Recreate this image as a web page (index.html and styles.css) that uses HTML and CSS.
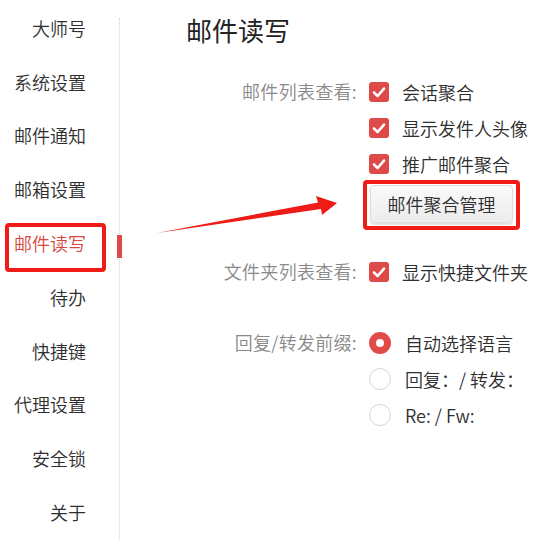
FILE: index.html
```html
<!DOCTYPE html>
<html lang="zh-CN">
<head>
    <meta charset="UTF-8">
    <meta name="viewport" content="width=device-width, initial-scale=1.0">
    <title>邮件读写</title>
    <link rel="stylesheet" href="styles.css">
</head>
<body>
    <div class="app">
        <nav class="sidebar">
            <a class="nav-item">大师号</a>
            <a class="nav-item">系统设置</a>
            <a class="nav-item">邮件通知</a>
            <a class="nav-item">邮箱设置</a>
            <a class="nav-item active">邮件读写<span class="mark"></span></a>
            <a class="nav-item">待办</a>
            <a class="nav-item">快捷键</a>
            <a class="nav-item">代理设置</a>
            <a class="nav-item">安全锁</a>
            <a class="nav-item">关于</a>
        </nav>

        <main class="content">
            <h1 class="title">邮件读写</h1>

            <div class="setting first">
                <div class="setting-label">邮件列表查看:</div>
                <div class="setting-options">
                    <label class="option">
                        <span class="checkbox"><svg viewBox="0 0 20 20"><polyline points="5,10.5 8.6,14 15,6.6"/></svg></span>
                        会话聚合
                    </label>
                    <label class="option">
                        <span class="checkbox"><svg viewBox="0 0 20 20"><polyline points="5,10.5 8.6,14 15,6.6"/></svg></span>
                        显示发件人头像
                    </label>
                    <label class="option">
                        <span class="checkbox"><svg viewBox="0 0 20 20"><polyline points="5,10.5 8.6,14 15,6.6"/></svg></span>
                        推广邮件聚合
                    </label>
                    <div class="btn-wrap">
                        <button class="btn">邮件聚合管理</button>
                    </div>
                </div>
            </div>

            <div class="setting second">
                <div class="setting-label">文件夹列表查看:</div>
                <div class="setting-options">
                    <label class="option">
                        <span class="checkbox"><svg viewBox="0 0 20 20"><polyline points="5,10.5 8.6,14 15,6.6"/></svg></span>
                        显示快捷文件夹
                    </label>
                </div>
            </div>

            <div class="setting third">
                <div class="setting-label">回复/转发前缀:</div>
                <div class="setting-options">
                    <label class="option radio-option">
                        <span class="radio checked"></span>
                        自动选择语言
                    </label>
                    <label class="option radio-option">
                        <span class="radio"></span>
                        回复：/ 转发：
                    </label>
                    <label class="option radio-option">
                        <span class="radio"></span>
                        Re: / Fw:
                    </label>
                </div>
            </div>
        </main>

        <!-- arrow annotation -->
        <svg class="arrow" viewBox="0 0 195 50">
            <polygon points="7,43 168,12.5 166,6 187,13 172,25 171,19"/>
        </svg>
    </div>
</body>
</html>
```

FILE: styles.css
```css
body {
    margin: 0;
    padding: 0;
    background-color: #ffffff;
    color: #333333;
    font-family: "Noto Sans CJK SC", "Noto Sans", sans-serif;
    font-weight: 350;
}

.app {
    position: relative;
    display: flex;
    width: 537px;
    height: 553px;
    overflow: hidden;
}

/* sidebar */
.sidebar {
    position: relative;
    width: 120px;
    flex-shrink: 0;
    padding-top: 1px;
    box-sizing: border-box;
}

.sidebar::after {
    content: "";
    position: absolute;
    left: 119px;
    top: 18px;
    height: 522px;
    border-left: 1px dotted #d4d4d4;
}

.nav-item {
    position: relative;
    display: flex;
    align-items: center;
    justify-content: flex-end;
    height: 53.8px;
    padding-right: 34px;
    font-size: 18px;
    color: #2e2e2e;
    cursor: pointer;
}

.nav-item.active {
    color: #d8463f;
}

/* red annotation box around the active item */
.nav-item.active::before {
    content: "";
    position: absolute;
    left: 5px;
    top: 6.8px;
    width: 101px;
    height: 49px;
    border: 4px solid #ee1b17;
    border-radius: 4px;
    box-sizing: border-box;
}

.mark {
    position: absolute;
    left: 117px;
    top: 19px;
    width: 5px;
    height: 23px;
    background-color: #de4a46;
    z-index: 1;
}

/* content */
.content {
    flex: 1;
    padding-left: 66px;
}

.title {
    margin: 12px 0 0;
    font-size: 26px;
    line-height: 36px;
    font-weight: normal;
    color: #222222;
}

.setting {
    display: grid;
    grid-template-columns: 171px 1fr;
    column-gap: 12px;
}

.setting.first {
    margin-top: 26px;
}

.setting.second {
    margin-top: 31px;
}

.setting.third {
    margin-top: 35px;
}

.setting-label {
    text-align: right;
    font-size: 18px;
    line-height: 35px;
    color: #888888;
    letter-spacing: 0.3px;
}

.option {
    display: flex;
    align-items: center;
    height: 36px;
    font-size: 18px;
    color: #2e2e2e;
    cursor: pointer;
}

.checkbox {
    display: flex;
    width: 20px;
    height: 20px;
    margin-right: 13px;
    background-color: #de4a47;
    border-radius: 3px;
}

.checkbox svg {
    width: 20px;
    height: 20px;
}

.checkbox polyline {
    fill: none;
    stroke: #ffffff;
    stroke-width: 2.6;
    stroke-linecap: round;
    stroke-linejoin: round;
}

.radio {
    width: 22px;
    height: 22px;
    margin-right: 14px;
    border: 1px solid #d6d6d6;
    border-radius: 50%;
    box-sizing: border-box;
    background-color: #ffffff;
}

.radio.checked {
    border: 7px solid #e04b47;
}

.btn-wrap {
    position: relative;
    display: inline-block;
    margin: 3px 0 0 1px;
}

.btn-wrap::after {
    content: "";
    position: absolute;
    left: -7px;
    right: -7px;
    top: -5px;
    bottom: -7px;
    border: 4px solid #ee1b17;
    border-radius: 4px;
}

.btn {
    width: 143px;
    height: 38px;
    padding: 0;
    font-family: inherit;
    font-weight: 350;
    font-size: 18px;
    color: #2e2e2e;
    background: linear-gradient(#fafafa, #ececec);
    border: 1px solid #dddddd;
    border-radius: 4px;
    box-shadow: 0 2px 2px rgba(0, 0, 0, 0.12);
    cursor: pointer;
}

.arrow {
    position: absolute;
    left: 150px;
    top: 190px;
    width: 195px;
    height: 50px;
}

.arrow polygon {
    fill: #ee1b17;
}
```
